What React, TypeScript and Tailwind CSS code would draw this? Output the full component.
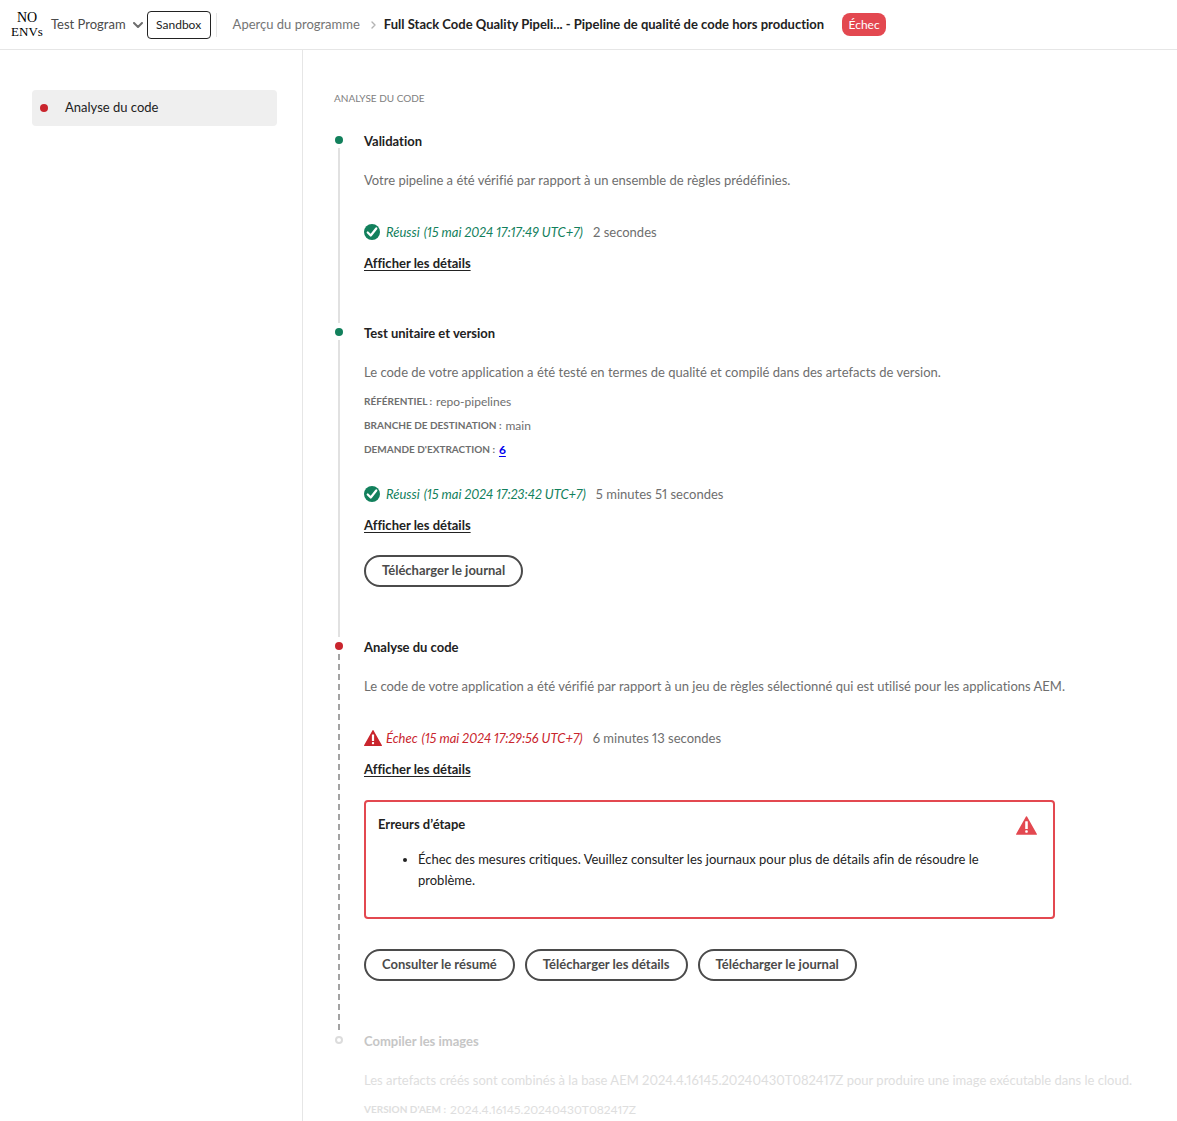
import type { ReactNode } from "react";

type Tone = "success" | "error" | "pending";

const dotStyles: Record<Tone, string> = {
  success: "bg-[#12805c]",
  error: "bg-[#c9252d]",
  pending: "border-2 border-[#dcdcdc] bg-white",
};

function CheckIcon() {
  return (
    <svg viewBox="0 0 18 18" className="h-4 w-4 shrink-0" aria-hidden="true">
      <circle cx="9" cy="9" r="9" fill="#12805c" />
      <path d="M4.2 9.6 7.6 13 13.8 5" fill="none" stroke="#fff" strokeWidth="2.5" strokeLinecap="round" strokeLinejoin="round" />
    </svg>
  );
}

function AlertIcon({ className, color }: { className: string; color: string }) {
  return (
    <svg viewBox="0 0 18 16" className={className} aria-hidden="true">
      <path d="M8.56.3.1 15.3a.45.45 0 0 0 .4.7h17a.45.45 0 0 0 .4-.7L9.44.3a.5.5 0 0 0-.88 0Z" fill={color} />
      <rect x="7.9" y="4.4" width="2.2" height="6.6" rx=".3" fill="#fff" />
      <rect x="7.9" y="12.1" width="2.2" height="2.2" rx=".7" fill="#fff" />
    </svg>
  );
}

function PillButton({ children }: { children: ReactNode }) {
  return (
    <button type="button" className="h-8 rounded-full border-2 border-[#4b4b4b] px-4 text-[13px] font-bold text-[#4b4b4b]">
      {children}
    </button>
  );
}

function Step({ title, description, tone, connector, children }: {
  title: string;
  description: string;
  tone: Tone;
  connector?: "solid" | "dashed";
  children: ReactNode;
}) {
  const pending = tone === "pending";
  return (
    <li className="flex">
      <div className="flex w-[30px] shrink-0 flex-col items-start pl-px pt-[5px]">
        <span className={`h-2 w-2 shrink-0 rounded-full ${dotStyles[tone]}`} />
        {connector === "solid" && <span className="ml-[3px] mt-1 w-0.5 grow bg-[#e1e1e1]" />}
        {connector === "dashed" && (
          <span className="ml-[3px] w-0.5 grow bg-[repeating-linear-gradient(to_bottom,transparent_0_4px,#a3a3a3_4px_10px)]" />
        )}
      </div>
      <div className={`min-w-0 grow ${connector ? "pb-[50px]" : ""}`}>
        <h2 className={`text-[13px] font-bold leading-5 ${pending ? "text-[#c6c6c6]" : "text-[#222]"}`}>{title}</h2>
        <p className={`mt-[19px] text-[13px] leading-5 ${pending ? "text-[#dedede]" : "text-[#6e6e6e]"}`}>{description}</p>
        {children}
      </div>
    </li>
  );
}

function Meta({ rows, faded }: { rows: [string, ReactNode][]; faded?: boolean }) {
  return (
    <dl className={`mt-2 text-xs ${faded ? "text-[#dedede]" : "text-[#6e6e6e]"}`}>
      {rows.map(([label, value]) => (
        <div key={label} className="flex h-6 items-center gap-1">
          <dt className="text-[10px] font-bold uppercase">{label} :</dt>
          <dd>{value}</dd>
        </div>
      ))}
    </dl>
  );
}

function Status({ tone, label, date, duration, className }: {
  tone: "success" | "error";
  label: string;
  date: string;
  duration: string;
  className: string;
}) {
  const failed = tone === "error";
  return (
    <div className={className}>
      <div className="flex items-center text-[13px] leading-5 text-[#6e6e6e]">
        <span className="flex w-[22px] shrink-0">
          {failed ? <AlertIcon className="h-4 w-[18px]" color="#c9252d" /> : <CheckIcon />}
        </span>
        <em className={`flex gap-1 ${failed ? "text-[#c9252d]" : "text-[#12805c]"}`}>
          <span>{label}</span>
          <span>({date})</span>
        </em>
        <span className="ml-2.5">{duration}</span>
      </div>
      <a href="#details" className="mt-[11px] block w-fit text-[13px] font-bold leading-5 text-[#222] underline underline-offset-2">
        Afficher les détails
      </a>
    </div>
  );
}

export default function App() {
  return (
    <div className="flex min-h-screen flex-col bg-white font-[Lato,sans-serif] text-[13px] text-[#222] [font-variant-ligatures:no-common-ligatures] [font-variant-numeric:proportional-nums]">
      <header className="flex h-[50px] shrink-0 items-center whitespace-nowrap border-b border-[#e6e6e6] pl-2.5">
        <div className="flex w-[34px] flex-col items-center font-['Liberation_Serif',serif] text-sm leading-[14px] text-black">
          <span>NO</span>
          <span className="text-[13px]">ENVs</span>
        </div>
        <button type="button" className="ml-[7px] flex items-center gap-[7px] text-[#4b4b4b]">
          Test Program
          <svg viewBox="0 0 10 6" className="h-1.5 w-2.5" fill="none" stroke="#6e6e6e" strokeWidth="2" strokeLinecap="round" strokeLinejoin="round" aria-hidden="true">
            <path d="m1 1 4 4 4-4" />
          </svg>
        </button>
        <span className="ml-1 flex h-7 w-16 items-center justify-center rounded border border-[#222] text-xs">Sandbox</span>
        <span className="ml-[5px] h-6 w-px bg-[#e6e6e6]" />
        <nav aria-label="Fil d’Ariane" className="ml-4 flex items-center">
          <a href="#apercu" className="text-[#747474]">Aperçu du programme</a>
          <svg viewBox="0 0 5 8" className="ml-[11px] mr-2 h-2 w-[5px]" fill="none" stroke="#b3b3b3" strokeWidth="1.4" strokeLinecap="round" strokeLinejoin="round" aria-hidden="true">
            <path d="m1 1 3 3-3 3" />
          </svg>
          <h1 className="font-bold">Full Stack Code Quality Pipeli... - Pipeline de qualité de code hors production</h1>
        </nav>
        <span className="ml-[18px] flex h-[23px] w-11 items-center justify-center rounded-lg bg-[#e34850] text-xs text-white">Échec</span>
      </header>

      <div className="flex grow">
        <aside className="w-[303px] shrink-0 border-r border-[#e6e6e6] py-10 pl-8 pr-[25px]">
          <a href="#analyse" className="flex h-9 items-center rounded bg-[#efefef] pl-2">
            <span className="h-2 w-2 rounded-full bg-[#c9252d]" />
            <span className="ml-[17px]">Analyse du code</span>
          </a>
        </aside>

        <main className="min-w-0 grow pl-[31px] pr-10 pt-[38px]">
          <p className="text-[10px] uppercase leading-5 text-[#808080]">Analyse du code</p>
          <ol className="mt-[23px]">
            <Step
              title="Validation"
              description="Votre pipeline a été vérifié par rapport à un ensemble de règles prédéfinies."
              tone="success"
              connector="solid"
            >
              <Status className="mt-8" tone="success" label="Réussi" date="15 mai 2024 17:17:49 UTC+7" duration="2 secondes" />
            </Step>

            <Step
              title="Test unitaire et version"
              description="Le code de votre application a été testé en termes de qualité et compilé dans des artefacts de version."
              tone="success"
              connector="solid"
            >
              <Meta
                rows={[
                  ["Référentiel", "repo-pipelines"],
                  ["Branche de destination", "main"],
                  ["Demande d'extraction", <a href="#6" className="font-bold text-[#0000ee] underline underline-offset-2">6</a>],
                ]}
              />
              <Status className="mt-[22px]" tone="success" label="Réussi" date="15 mai 2024 17:23:42 UTC+7" duration="5 minutes 51 secondes" />
              <div className="mt-5 flex">
                <PillButton>Télécharger le journal</PillButton>
              </div>
            </Step>

            <Step
              title="Analyse du code"
              description="Le code de votre application a été vérifié par rapport à un jeu de règles sélectionné qui est utilisé pour les applications AEM."
              tone="error"
              connector="dashed"
            >
              <Status className="mt-8" tone="error" label="Échec" date="15 mai 2024 17:29:56 UTC+7" duration="6 minutes 13 secondes" />
              <section className="mt-[21px] flex max-w-[691px] items-start rounded border-2 border-[#e34850] px-3 pb-[26px] pt-3">
                <div className="grow">
                  <h3 className="font-bold leading-5">Erreurs d’étape</h3>
                  <ul className="mt-[15px] list-disc pl-10 leading-[21px]">
                    <li>Échec des mesures critiques. Veuillez consulter les journaux pour plus de détails afin de résoudre le problème.</li>
                  </ul>
                </div>
                <AlertIcon className="ml-8 mr-1 mt-0.5 h-[19px] w-[21px] shrink-0" color="#e34850" />
              </section>
              <div className="mt-[30px] flex flex-wrap gap-2.5">
                <PillButton>Consulter le résumé</PillButton>
                <PillButton>Télécharger les détails</PillButton>
                <PillButton>Télécharger le journal</PillButton>
              </div>
            </Step>

            <Step
              title="Compiler les images"
              description="Les artefacts créés sont combinés à la base AEM 2024.4.16145.20240430T082417Z pour produire une image exécutable dans le cloud."
              tone="pending"
            >
              <Meta faded rows={[["Version d'AEM", "2024.4.16145.20240430T082417Z"]]} />
            </Step>
          </ol>
        </main>
      </div>
    </div>
  );
}
